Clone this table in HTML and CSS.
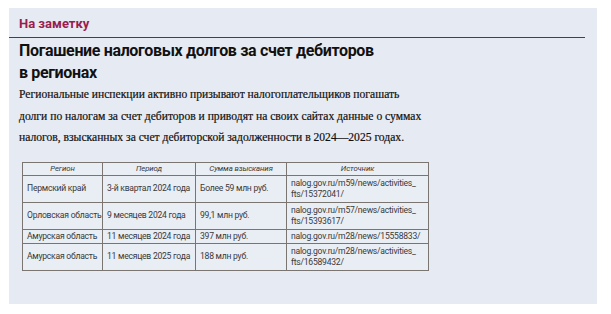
FILE: index.html
```html
<!DOCTYPE html>
<html lang="ru">
<head>
<meta charset="utf-8">
<link rel="stylesheet" href="styles.css">
</head>
<body>
<section class="note">
  <div class="note-label">На заметку</div>
  <div class="note-body">
    <h2 class="note-title">Погашение налоговых долгов за счет дебиторов<br>в регионах</h2>
    <p class="note-text">Региональные инспекции активно призывают налогоплательщиков погашать<br>долги по налогам за счет дебиторов и приводят на своих сайтах данные о суммах<br>налогов, взысканных за счет дебиторской задолженности в 2024—2025 годах.</p>
    <table class="data">
      <colgroup>
        <col class="c1"><col class="c2"><col class="c3"><col class="c4">
      </colgroup>
      <thead>
        <tr><th>Регион</th><th>Период</th><th>Сумма взыскания</th><th>Источник</th></tr>
      </thead>
      <tbody>
        <tr class="tall"><td>Пермский край</td><td>3-й квартал 2024 года</td><td>Более 59 млн руб.</td><td>nalog.gov.ru/m59/news/activities_<br>fts/15372041/</td></tr>
        <tr class="tall"><td>Орловская область</td><td>9 месяцев 2024 года</td><td>99,1 млн руб.</td><td>nalog.gov.ru/m57/news/activities_<br>fts/15393617/</td></tr>
        <tr class="short"><td>Амурская область</td><td>11 месяцев 2024 года</td><td>397 млн руб.</td><td>nalog.gov.ru/m28/news/15558833/</td></tr>
        <tr class="tall"><td>Амурская область</td><td>11 месяцев 2025 года</td><td>188 млн руб.</td><td>nalog.gov.ru/m28/news/activities_<br>fts/16589432/</td></tr>
      </tbody>
    </table>
  </div>
</section>
</body>
</html>
```
FILE: styles.css
```css
html, body { margin: 0; padding: 0; background: #ffffff; }
body { width: 611px; height: 314px; overflow: hidden; }

.note {
  margin: 8px 0 0 9px;
  width: 588px;
  height: 296px;
  background: #e6eaf2;
  box-sizing: border-box;
}

.note-label {
  margin-right: 12px;
  height: 30px;
  border-bottom: 1px solid #8c1d45;
  padding: 9px 0 0 10px;
  box-sizing: border-box;
  font-family: "Roboto", "Liberation Sans", sans-serif;
  font-weight: 700;
  font-size: 13px;
  line-height: 14px;
  color: #9a1d4e;
}

.note-body { padding: 2px 0 0 10px; }

.note-title {
  margin: 0;
  font-family: "Roboto", "Liberation Sans", sans-serif;
  font-weight: 700;
  font-size: 16px;
  line-height: 22px;
  letter-spacing: -0.35px;
  color: #111111;
}

.note-text {
  margin: 0;
  font-family: "Liberation Serif", serif;
  font-size: 11.6px;
  line-height: 21.5px;
  color: #111111;
  -webkit-text-stroke: 0.2px #111111;
}

.data {
  margin: 13px 0 0 3px;
  border-collapse: collapse;
  table-layout: fixed;
  width: 406px;
  font-family: "Roboto", "Liberation Sans", sans-serif;
  font-size: 8.6px;
  letter-spacing: -0.25px;
  color: #3a3a3a;
  background: #e9edf4;
}
.data .c1 { width: 80px; }
.data .c2 { width: 93px; }
.data .c3 { width: 91px; }
.data .c4 { width: 142px; }

.data th, .data td {
  border: 1px solid #7a7570;
  padding: 0 0 0 4px;
  vertical-align: middle;
  white-space: nowrap;
  overflow: hidden;
}
.data th {
  height: 12px;
  font-weight: 400;
  font-style: italic;
  font-size: 7.8px;
  letter-spacing: -0.1px;
  line-height: 10px;
  text-align: center;
  padding: 0;
}
.data td { line-height: 11px; }
.data tr.tall td { height: 26px; }
.data tr.short td { height: 13px; }
```
